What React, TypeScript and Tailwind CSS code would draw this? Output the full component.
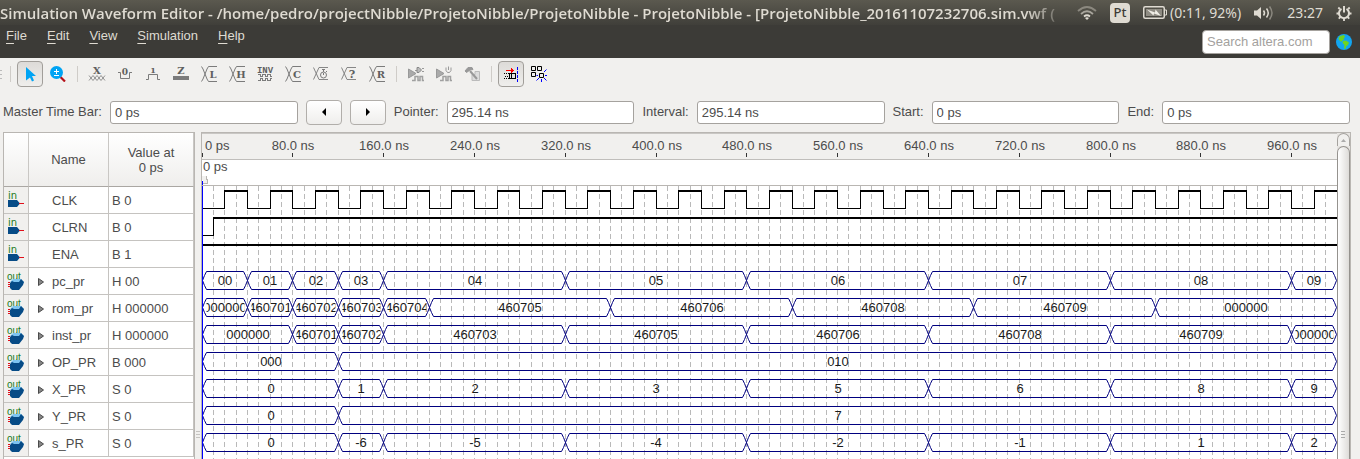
import { useEffect, useRef, useState } from "react";
import type { ReactNode } from "react";

const SPAN_NS = 1000;

type Signal = {
  name: string;
  value: string;
  kind: "in" | "out";
  /** Level changes for single-bit signals: [time, level] */
  levels?: [number, 0 | 1][];
  /** Bus values: [start time, label] */
  bus?: [number, string][];
};

const clock: [number, 0 | 1][] = Array.from({ length: 50 }, (_, i) => [i * 20, (i % 2) as 0 | 1]);

const signals: Signal[] = [
  { name: "CLK", value: "B 0", kind: "in", levels: clock },
  { name: "CLRN", value: "B 0", kind: "in", levels: [[0, 0], [10, 1]] },
  { name: "ENA", value: "B 1", kind: "in", levels: [[0, 1]] },
  {
    name: "pc_pr", value: "H 00", kind: "out",
    bus: [[0, "00"], [40, "01"], [80, "02"], [120, "03"], [160, "04"], [320, "05"], [480, "06"], [640, "07"], [800, "08"], [960, "09"]],
  },
  {
    name: "rom_pr", value: "H 000000", kind: "out",
    bus: [[0, "000000"], [40, "460701"], [80, "460702"], [120, "460703"], [160, "460704"], [200, "460705"], [360, "460706"], [520, "460708"], [680, "460709"], [840, "000000"]],
  },
  {
    name: "inst_pr", value: "H 000000", kind: "out",
    bus: [[0, "000000"], [80, "460701"], [120, "460702"], [160, "460703"], [320, "460705"], [480, "460706"], [640, "460708"], [800, "460709"], [960, "000000"]],
  },
  { name: "OP_PR", value: "B 000", kind: "out", bus: [[0, "000"], [120, "010"]] },
  {
    name: "X_PR", value: "S 0", kind: "out",
    bus: [[0, "0"], [120, "1"], [160, "2"], [320, "3"], [480, "5"], [640, "6"], [800, "8"], [960, "9"]],
  },
  { name: "Y_PR", value: "S 0", kind: "out", bus: [[0, "0"], [120, "7"]] },
  {
    name: "s_PR", value: "S 0", kind: "out",
    bus: [[0, "0"], [120, "-6"], [160, "-5"], [320, "-4"], [480, "-2"], [640, "-1"], [800, "1"], [960, "2"]],
  },
];

const ROW = 27;
const HIGH = 4;
const LOW = 22;

function Levels({ data, row, x }: { data: [number, 0 | 1][]; row: number; x: (t: number) => number }) {
  const top = row * ROW;
  return (
    <g fill="#000">
      {data.map(([t, level], i) => {
        const a = x(t);
        const b = x(i + 1 < data.length ? data[i + 1][0] : SPAN_NS);
        return (
          <g key={t}>
            <rect x={a} y={top + (level ? HIGH : LOW)} width={b - a + 1} height={level ? 2 : 1} />
            {i > 0 && <rect x={a} y={top + HIGH} width={1} height={LOW - HIGH + 1} />}
          </g>
        );
      })}
    </g>
  );
}

function Bus({ data, row, x }: { data: [number, string][]; row: number; x: (t: number) => number }) {
  const top = row * ROW + HIGH + 0.5;
  const bottom = row * ROW + LOW + 0.5;
  const mid = (top + bottom) / 2;
  return (
    <g>
      {data.map(([t, label], i) => {
        const a = x(t) + 0.5;
        const b = x(i + 1 < data.length ? data[i + 1][0] : SPAN_NS) + 0.5;
        const id = `clip-${row}-${i}`;
        return (
          <g key={t}>
            <clipPath id={id}>
              <rect x={a + 4} y={top} width={Math.max(0, b - a - 7)} height={LOW - HIGH} />
            </clipPath>
            <path
              d={`M${a} ${mid}L${a + 2} ${top + 4}L${a + 4} ${top}H${b - 4}L${b - 2} ${top + 4}L${b} ${mid}L${b - 2} ${bottom - 4}L${b - 4} ${bottom}H${a + 4}L${a + 2} ${bottom - 4}Z`}
              fill="none"
              stroke="#00007f"
            />
            <text x={Math.round((a + b) / 2)} y={row * ROW + 18} textAnchor="middle" fill="#1a1a1a" clipPath={`url(#${id})`}>
              {label}
            </text>
          </g>
        );
      })}
    </g>
  );
}

function WavePanel() {
  const ref = useRef<HTMLDivElement>(null);
  const [width, setWidth] = useState(1135);
  useEffect(() => {
    const el = ref.current;
    if (!el) return;
    const observer = new ResizeObserver(() => setWidth(el.clientWidth));
    observer.observe(el);
    return () => observer.disconnect();
  }, []);
  const x = (t: number) => Math.min(width - 1, Math.floor((t * width) / SPAN_NS));
  const ticks = Array.from({ length: 13 }, (_, i) => i * 80);
  const grid = Array.from({ length: 99 }, (_, i) => (i + 1) * 10);

  return (
    <section aria-label="Waveforms" className="flex min-w-0 flex-1 border border-b-0 border-[#b9b6b2] bg-white">
      <div ref={ref} className="flex min-w-0 flex-1 flex-col">
        <div className="h-[27px] overflow-hidden border-t border-b border-t-[#c9c7c4] border-b-[#c0bebb] bg-[#f1f0ee]">
          <svg className="block h-full w-full text-[13px]" fill="#4c4c4c">
            {ticks.map((t) => (
              <g key={t}>
                <text x={t ? x(t) + 1 : 3} y={16} textAnchor={t ? "middle" : "start"}>
                  {t ? `${t}.0 ns` : "0 ps"}
                </text>
                <rect x={x(t)} y={19} width={1} height={4} fill="#333" />
              </g>
            ))}
          </svg>
        </div>
        <div className="relative h-[26px] border-b border-[#b9b6b2] pl-px text-[13px] leading-[13px] text-[#4c4c4c]">
          0 ps
          <svg className="absolute bottom-0 left-0 h-[10px] w-[7px]" shapeRendering="crispEdges">
            <path d="M0 1H5V5H6V9H1" fill="#f1f0ee" />
            <path d="M4.500 1V4.500H5.500V8.500H1" fill="none" stroke="#b9b6b2" />
            <rect x="0" y="6" width="1" height="4" fill="#0000ff" />
          </svg>
        </div>
        <svg className="block min-h-[270px] w-full flex-1 text-[13px]">
          {grid.map((t) => (
            <line key={t} x1={x(t) + 0.5} x2={x(t) + 0.5} y1={0} y2="100%" stroke="#b9b9b9" strokeDasharray="5 3" />
          ))}
          {signals.map((s, i) =>
            s.levels ? (
              <Levels key={s.name} data={s.levels} row={i} x={x} />
            ) : (
              <Bus key={s.name} data={s.bus ?? []} row={i} x={x} />
            ),
          )}
          <rect x={0} y={0} width={1} height="100%" fill="#0000ff" />
        </svg>
      </div>
      <div className="flex w-[13px] flex-col bg-[#e6e4e1]">
        <div className="flex h-[13px] items-center justify-center rounded-t-full border border-b-0 border-[#a5a29e] bg-[#f1f0ee]">
          <svg className="h-[3px] w-[5px]" viewBox="0 0 5 3">
            <path d="M0 3L2.500 0L5 3Z" fill="#aaa" />
          </svg>
        </div>
        <div className="relative flex-1 rounded-t-full border border-b-0 border-[#95928e] bg-linear-to-r from-white to-[#dedcd9]">
          <svg className="absolute right-[4px] bottom-[20px] h-[8px] w-[4px]">
            <path d="M0 .5H4M0 3.500H4M0 6.500H4" stroke="#aaa" />
          </svg>
        </div>
      </div>
    </section>
  );
}

function PinIcon({ kind }: { kind: "in" | "out" }) {
  return (
    <svg className="mx-auto block h-[20px] w-[17px] overflow-visible" viewBox="0 0 17 20">
      {kind === "in" ? (
        <>
          <text x="0" y="9" fontSize="10" fill="#1c7a1c" fontFamily="DejaVu Sans">in</text>
          <path d="M0 10H9L12 13.500L9 17H0Z" fill="#064b86" />
          <path d="M11 13.500H16" stroke="#e0101a" />
        </>
      ) : (
        <>
          <text x="-1" y="9" fontSize="10" fill="#1c7a1c" fontFamily="Liberation Sans">out</text>
          <path d="M5 8H13L16 11L14 14L10 11H2Z" fill="#7cc4f0" />
          <path d="M2 12L4 10L6 11H11L13 8L16 11L15 14L11 19H4L2 17Z" fill="#064b86" />
          <path d="M0 11.500H2M0 13.500H2M0 15.500H2" stroke="#e0101a" />
        </>
      )}
    </svg>
  );
}

function SignalTable() {
  return (
    <section aria-label="Signals" className="w-[192px] shrink-0 border border-b-0 border-[#b9b6b2] bg-white">
      <table className="w-full table-fixed border-separate border-spacing-0 text-[13px] text-[#4c4c4c]">
        <colgroup>
          <col className="w-[25px]" />
          <col className="w-[80px]" />
          <col />
        </colgroup>
        <thead>
          <tr className="h-[54px] bg-linear-to-b from-white to-[#efeeec] leading-[15px]">
            <th className="border-r border-b border-r-[#c9c7c4] border-b-[#aaa7a3] p-0" aria-label="Type" />
            <th className="border-r border-b border-r-[#c9c7c4] border-b-[#aaa7a3] p-0 font-normal">Name</th>
            <th className="border-r border-b border-r-[#c9c7c4] border-b-[#aaa7a3] p-0 font-normal">
              Value at
              <br />0 ps
            </th>
          </tr>
        </thead>
        <tbody>
          {signals.map((s) => (
            <tr key={s.name} className="h-[27px] leading-[20px]">
              <td className="border-r border-b border-[#c5c3c0] bg-[#f1f0ee] p-0">
                <PinIcon kind={s.kind} />
              </td>
              <td className="border-r border-b border-[#c5c3c0] p-0 pt-[2px]">
                <div className="flex items-center">
                  <span className="flex w-[23px] justify-center">
                    {s.kind === "out" && (
                      <button type="button" aria-label={`Expand ${s.name}`} className="block">
                        <svg className="h-[8px] w-[6px]" viewBox="0 0 6 8">
                          <path d="M.5 .5L5.500 4L.5 7.500Z" fill="#888" stroke="#4a4a4a" />
                        </svg>
                      </button>
                    )}
                  </span>
                  <span>{s.name}</span>
                </div>
              </td>
              <td className="border-r border-b border-[#c5c3c0] pt-[2px] pr-0 pb-0 pl-[3px]">{s.value}</td>
            </tr>
          ))}
        </tbody>
      </table>
    </section>
  );
}

function Glyph({ children }: { children: ReactNode }) {
  return (
    <svg className="size-4 overflow-visible" viewBox="0 0 16 16" fill="none" stroke="#7b7b7b">
      {children}
    </svg>
  );
}

function Letter({ x, y, size = 10, font = "DejaVu Serif", children }: { x: number; y: number; size?: number; font?: string; children: string }) {
  return (
    <text x={x} y={y} textAnchor="middle" fontSize={size} fontWeight="bold" fontFamily={font} fill="#5f5f5f" stroke="none">
      {children}
    </text>
  );
}

function Cross({ letter }: { letter: string }) {
  return (
    <Glyph>
      <path d="M.5 .5L2 3L6 13L7.500 15.500H16M.5 15.500L2 13L6 3L7.500 .5H16" />
      <Letter x={12} y={12}>{letter}</Letter>
    </Glyph>
  );
}

const gate = <path d="M.5 3L8 7.500L.5 12Z" fill="#aaa" stroke="#999" />;
const pulses = <path d="M4 14.500H7V10.500H10V14.500H12V10.500H14.500V14.500H16" stroke="#a0a0a0" strokeWidth="1.500" />;

const valueTools: [string, ReactNode][] = [
  ["Forcing unknown", <Glyph><Letter x={8} y={8} size={10}>X</Letter><path d="M0 14.500L4 9.500L8 14.500L12 9.500L16 14.500M0 9.500L4 14.500L8 9.500L12 14.500L16 9.500" strokeWidth=".8" /></Glyph>],
  ["Forcing low", <Glyph><path d="M1 6.500H3.500V12.500H12.500V6.500H15" /><Letter x={8} y={9} size={9}>0</Letter></Glyph>],
  ["Forcing high", <Glyph><path d="M1 13.500H3.500V8.500H12.500V13.500H15" /><Letter x={8} y={7} size={8}>1</Letter></Glyph>],
  ["High impedance", <Glyph><Letter x={8} y={8} size={10}>Z</Letter><path d="M0 12H16" strokeWidth="4" /></Glyph>],
  ["Weak low", <Cross letter="L" />],
  ["Weak high", <Cross letter="H" />],
  ["Invert", <Glyph><Letter x={8} y={7} size={9} font="Liberation Mono">INV</Letter><path d="M1 8.500H3.500V10.500H5.500V8.500H8.500V10.500H10.500V8.500H13.500V10.500H15M1 14.500H3.500V12.500H5.500V14.500H8.500V12.500H10.500V14.500H13.500V12.500H15" shapeRendering="crispEdges" /></Glyph>],
  ["Count value", <Cross letter="C" />],
  ["Overwrite clock", <Glyph><path d="M.5 1.500L6 13.500H15M.5 13.500L6 1.500H15" strokeWidth=".9" /><circle cx="10.500" cy="9" r="3" /><path d="M10.500 9V7M9 3.500H12M10.500 3.500V6M13 5L14 6" /></Glyph>],
  ["Arbitrary value", <Glyph><path d="M.5 1.500L6 13.500H15M.5 13.500L6 1.500H15" strokeWidth=".9" /><Letter x={11} y={12} size={11}>?</Letter></Glyph>],
  ["Random value", <Cross letter="R" />],
];

const runTools: [string, ReactNode][] = [
  ["Run functional simulation", <Glyph>{gate}{pulses}<path d="M7 4.500H9M14 2.500H16M14 5.500H16" stroke="#999" /><path d="M9 1.500H11L13.500 4L11 6.500H9Z" fill="#bbb" stroke="#888" /></Glyph>],
  ["Run timing simulation", <Glyph>{gate}{pulses}<path d="M10 1.500V4.500L11.500 6.500H13.500L15 4.500V1.500M12.500 .5V4" stroke="#999" /></Glyph>],
  ["Generate testbench", <Glyph><path d="M1 5L4 1.500H8L9 3.500L6 4L2.500 6.500Z" fill="#999" stroke="#999" /><path d="M8 14.500V8.500H11V5.500H15.500V14.500Z" fill="#ddd" stroke="#bbb" /><path d="M6 5L13 13" stroke="#999" strokeWidth="2" /></Glyph>],
];

function Tool({ label, active, children }: { label: string; active?: boolean; children: ReactNode }) {
  return (
    <button
      type="button"
      aria-label={label}
      aria-pressed={active}
      className={
        active
          ? "flex size-[26px] items-center justify-center rounded border border-[#a19e9a] bg-linear-to-b from-[#dddbd8] to-[#efeeec]"
          : "flex size-[26px] items-center justify-center"
      }
    >
      {children}
    </button>
  );
}

function Separator() {
  return (
    <div className="flex h-4 w-[9px] justify-center">
      <div className="w-px bg-[#cfccc8]" />
    </div>
  );
}

function Toolbar() {
  return (
    <div role="toolbar" aria-label="Waveform tools" className="flex h-8 items-center gap-[2px]">
      <svg className="h-[9px] w-1">
        <path d="M0 .5H2M0 4.500H2M0 8.500H2" stroke="#bbb" />
      </svg>
      <Separator />
      <Tool label="Selection tool" active>
        <svg className="ml-[2px] h-[16px] w-[12px]" viewBox="0 0 12 16">
          <path d="M1 1L11 10H7L9 14.500L7 15.500L5 11.500L1 14.500Z" fill="#00a4f4" />
        </svg>
      </Tool>
      <Tool label="Zoom tool">
        <svg className="size-4" viewBox="0 0 16 16">
          <path d="M10.500 11L15 15.500" stroke="#b51019" strokeWidth="2.200" />
          <circle cx="6.500" cy="6.500" r="6.500" fill="#00a4f4" />
          <path d="M4 5.500H9M6.500 3V8M4 9.500H9" stroke="#fff" />
        </svg>
      </Tool>
      <Separator />
      {valueTools.map(([label, icon]) => (
        <Tool key={label} label={label}>{icon}</Tool>
      ))}
      <Separator />
      {runTools.map(([label, icon]) => (
        <Tool key={label} label={label}>{icon}</Tool>
      ))}
      <Separator />
      <Tool label="Snap to grid" active>
        <svg className="size-4" viewBox="0 0 16 16" fill="none" shapeRendering="crispEdges">
          <path d="M3 4.500H10" stroke="#f00" />
          <path d="M8 2L11 4.500L8 7Z" fill="#f00" />
          <path d="M6 7.500H12V12.500H6ZM8.500 8V13" stroke="#000" />
          <path d="M1 7.500H6M2 10.500H6M1 12.500H6" stroke="#000" strokeDasharray="1 1" />
          <path d="M14.500 1V16" stroke="#0000ff" strokeDasharray="3 1" />
        </svg>
      </Tool>
      <Tool label="Snap to transition">
        <svg className="size-4" viewBox="0 0 16 16" fill="none">
          <path d="M.5 .5H4.500V4.500H.5ZM6.500 .5H10.500V4.500H6.500ZM.5 6.500H4.500V10.500H.5ZM8.500 7.500H12.500V11.500H8.500Z" stroke="#000" />
          <path d="M13 6L15.500 3.500M14 9.500H16M13 12L15.500 14.500M10.500 13V16M8 12L5.500 14.500M7 9.500H5.500" stroke="#0000ff" />
        </svg>
      </Tool>
    </div>
  );
}

function TimeInput({ id, value }: { id: string; value: string }) {
  return (
    <input
      id={id}
      defaultValue={value}
      className="h-[23px] w-full min-w-0 flex-1 rounded-[3px] border border-[#a5a29e] bg-white px-1 text-[#4c4c4c]"
    />
  );
}

function StepButton({ label, d }: { label: string; d: string }) {
  return (
    <button
      type="button"
      aria-label={label}
      className="flex h-[25px] w-9 shrink-0 items-center justify-center rounded border border-[#b1aeaa] bg-linear-to-b from-white to-[#efeeec]"
    >
      <svg className="h-[8px] w-[4px]" viewBox="0 0 4 8">
        <path d={d} fill="#000" />
      </svg>
    </button>
  );
}

function TimeBar() {
  return (
    <div className="flex h-10 items-center gap-2 pr-[10px] pl-[3px] text-[13px] text-[#4c4c4c]">
      <label htmlFor="master" className="shrink-0 whitespace-nowrap">Master Time Bar:</label>
      <TimeInput id="master" value="0 ps" />
      <StepButton label="Previous transition" d="M4 0V8L0 4Z" />
      <StepButton label="Next transition" d="M0 0V8L4 4Z" />
      <label htmlFor="pointer" className="shrink-0">Pointer:</label>
      <TimeInput id="pointer" value="295.14 ns" />
      <label htmlFor="interval" className="shrink-0">Interval:</label>
      <TimeInput id="interval" value="295.14 ns" />
      <label htmlFor="start" className="shrink-0">Start:</label>
      <TimeInput id="start" value="0 ps" />
      <label htmlFor="end" className="shrink-0">End:</label>
      <TimeInput id="end" value="0 ps" />
    </div>
  );
}

function SystemBar() {
  return (
    <header className="flex h-[25px] items-center bg-linear-to-b from-[#5b594f] to-[#403f3a] font-['Noto_Sans',sans-serif] text-[14px] text-[#dfdbd2]">
      <h1 className="min-w-0 flex-1 overflow-hidden font-['Open_Sans',sans-serif] text-[15px] leading-6 font-semibold whitespace-nowrap [mask-image:linear-gradient(to_right,black_calc(100%-44px),transparent)]">
        Simulation Waveform Editor - /home/pedro/projectNibble/ProjetoNibble/ProjetoNibble - ProjetoNibble - [ProjetoNibble_20161107232706.sim.vwf (
      </h1>
      <div className="flex shrink-0 items-center gap-[13px] pr-2 pl-2">
        <svg className="h-[14px] w-[20px]" viewBox="0 0 20 14" fill="none" strokeWidth="1.800">
          <path d="M1 5Q10 -3 19 5" stroke="#8b887f" />
          <path d="M4 8Q10 2.500 16 8" stroke="#a8a59c" />
          <path d="M7 10.500Q10 8 13 10.500" stroke="#dfdbd2" />
          <path d="M8 12L10 14L12 12Q10 10.500 8 12Z" fill="#dfdbd2" />
        </svg>
        <span className="flex size-5 items-center justify-center rounded-sm bg-[#dfdbd2] text-[13px] font-medium text-[#3c3b37]">Pt</span>
        <div className="flex items-center gap-[3px]">
          <svg className="h-[13px] w-[24px]" viewBox="0 0 24 13" fill="none">
            <rect x=".75" y=".75" width="20.500" height="11.500" rx="1.500" stroke="#dfdbd2" strokeWidth="1.500" />
            <rect x="3" y="3" width="16" height="7" fill="#8f8c83" />
            <path d="M22 4H23.500V9H22" stroke="#dfdbd2" />
            <path d="M4 3.500L12 6.500L12.500 3.500L18 10L11 7.500L10.500 9.500Z" fill="#f0ede5" />
          </svg>
          <span>(0:11, 92%)</span>
        </div>
        <svg className="h-[14px] w-[20px]" viewBox="0 0 20 14" fill="none" strokeWidth="1.500">
          <path d="M0 4.500H3L7 1V13L3 9.500H0Z" fill="#dfdbd2" />
          <path d="M9.500 4.500Q11.500 7 9.500 9.500M12.500 2.500Q16 7 12.500 11.500" stroke="#dfdbd2" />
          <path d="M15.500 .5Q20.500 7 15.500 13.500" stroke="#8b887f" />
        </svg>
        <time>23:27</time>
        <svg className="size-4" viewBox="0 0 16 16" fill="none" stroke="#dfdbd2">
          <path d="M5.500 3.800A5 5 0 1 0 10.500 3.800" strokeWidth="2" />
          <path d="M8 1V7.500" strokeWidth="2" />
          <path d="M3.800 4L2.300 2.500M12.200 4L13.700 2.500M3 8.500H.5M13 8.500H15.500M4.500 12L2.700 13.700M11.500 12L13.300 13.700M8 13V16" strokeWidth="1.800" />
        </svg>
      </div>
    </header>
  );
}

function MenuBar() {
  return (
    <div className="flex h-[33px] justify-between bg-[#3c3b37] pr-2 pl-[6px] text-[13px] text-[#dfdbd2]">
      <nav className="flex h-[22px] items-center gap-5">
        {["File", "Edit", "View", "Simulation", "Help"].map((m) => (
          <button key={m} type="button" className="leading-5">
            <span className="underline decoration-1 underline-offset-[3px]">{m[0]}</span>
            {m.slice(1)}
          </button>
        ))}
      </nav>
      <div className="flex items-center gap-[6px]">
        <input
          aria-label="Search altera.com"
          placeholder="Search altera.com"
          className="h-6 w-32 rounded border border-[#a5a29e] bg-white px-1 text-[#4c4c4c] placeholder:text-[#a3a19e]"
        />
        <svg className="size-4" viewBox="0 0 16 16">
          <circle cx="8" cy="8" r="8" fill="#12a5f0" />
          <path d="M4 2L8 1L9 3L7.500 4.500L8 6L6 6.500L5.500 8L3 6L2.500 4Z" fill="#6fd420" />
          <path d="M7 7L10 6.500L13 8.500L12 11L10 12.500L9.500 15L8 14.500L8.500 11L6.500 9Z" fill="#6fd420" />
        </svg>
      </div>
    </div>
  );
}

export default function App() {
  return (
    <div className="flex min-h-screen flex-col bg-[#f1f0ee] font-['Liberation_Sans',Arial,sans-serif]">
      <SystemBar />
      <MenuBar />
      <Toolbar />
      <div className="h-[2px]" />
      <TimeBar />
      <main className="flex flex-1 pr-[9px] pl-[3px]">
        <SignalTable />
        <div className="flex w-[6px] shrink-0 items-end justify-center pb-5">
          <svg className="h-[8px] w-[4px]">
            <path d="M0 .5H4M0 3.500H4M0 6.500H4" stroke="#c5c3c0" />
          </svg>
        </div>
        <WavePanel />
      </main>
    </div>
  );
}
